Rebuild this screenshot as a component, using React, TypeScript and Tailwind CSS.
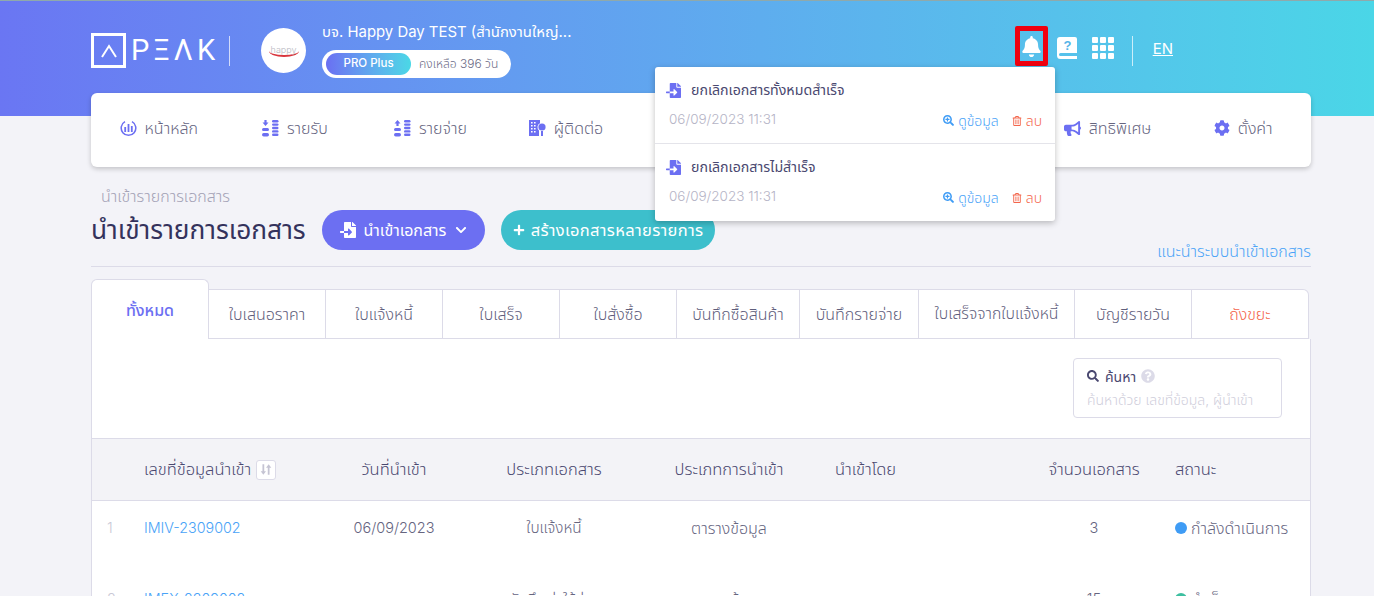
import { FaBell, FaBullhorn, FaChevronDown, FaCog, FaFileImport, FaPlus, FaQuestionCircle, FaRegTrashAlt, FaSearch, FaSearchPlus } from "react-icons/fa";

const font = "font-['Inter','Noto_Sans_Thai','Noto_Sans',sans-serif]";

const tabs = [
  { label: "ใบเสนอราคา", cls: "w-[117px] text-[16px]" },
  { label: "ใบแจ้งหนี้", cls: "w-[117px] text-[16px]" },
  { label: "ใบเสร็จ", cls: "w-[117px] text-[16px]" },
  { label: "ใบสั่งซื้อ", cls: "w-[117px] text-[16px]" },
  { label: "บันทึกซื้อสินค้า", cls: "w-[123px] text-[16px]" },
  { label: "บันทึกรายจ่าย", cls: "w-[119px] text-[16px]" },
  { label: "ใบเสร็จจากใบแจ้งหนี้", cls: "w-[156px] text-[15.800px]" },
  { label: "บัญชีรายวัน", cls: "w-[117px] text-[16px]" },
];

const gridCols = "grid grid-cols-[52px_178px_144px_176px_174px_204px_148px_1fr] items-center";

function StackIcon({ up }: { up?: boolean }) {
  return (
    <svg width="18" height="18" viewBox="0 0 18 18" fill="#6c6ff2">
      <path d={up ? "M4.5 1 7.5 4.5H5.6V7H3.4V4.5H1.5Z" : "M3.4 1H5.6V3.5H7.5L4.5 7 1.5 3.5H3.4Z"} />
      <rect x="1" y="9" width="7" height="3" rx="1.5" />
      <rect x="1" y="14" width="7" height="3.4" rx="1.7" />
      {[1, 4.4, 7.8, 11.2, 14.6].map((y) => (
        <rect key={y} x="11" y={y} width="6.5" height="2.4" rx="1.2" />
      ))}
    </svg>
  );
}

function HomeIcon() {
  return (
    <svg width="17" height="17" viewBox="0 0 17 17" fill="none" stroke="#6c6ff2">
      <path d="M5 1.6a7.3 7.3 0 1 0 7 0" strokeWidth="1.5" />
      <path d="M5.2 7v5M8.5 4v8M11.8 6v6" strokeWidth="1.8" />
    </svg>
  );
}

function ContactIcon() {
  return (
    <svg width="18" height="18" viewBox="0 0 18 18" fill="#6c6ff2">
      <path d="M1 1h11v3.2a4.4 4.4 0 0 0-1 7.3V17H1Z" />
      <path d="M3 3h1.6v1.6H3ZM6 3h1.6v1.6H6ZM3 6h1.6v1.6H3ZM6 6h1.6v1.6H6ZM3 9h1.6v1.6H3ZM6 9h1.6v1.6H6ZM3 12h1.6v1.6H3ZM6 12h1.6v1.6H6Z" fill="#fff" />
      <circle cx="14" cy="8" r="3.6" />
      <path d="M13 12h2v5h-2Z" />
    </svg>
  );
}

function HelpBook() {
  return (
    <svg width="20" height="22" viewBox="0 0 20 22">
      <path d="M3 0h15a2 2 0 0 1 2 2v14H3.500a1.500 1.500 0 0 0 0 3H20v3H3.500A3.500 3.500 0 0 1 0 18.500V3a3 3 0 0 1 3-3Z" fill="#fff" />
      <text x="10.500" y="12.500" textAnchor="middle" fontSize="13" fontWeight="700" fill="#55b4e8" fontFamily="Liberation Sans">?</text>
    </svg>
  );
}

function AppsGrid() {
  return (
    <div className="grid grid-cols-3 gap-[2px]">
      {Array.from({ length: 9 }).map((_, i) => (
        <span key={i} className="w-[6px] h-[6px] bg-white rounded-[1px]" />
      ))}
    </div>
  );
}

function Notification({ title, last }: { title: string; last?: boolean }) {
  return (
    <div className={`h-[77px] pl-[14px] pr-[13px] pt-[12px] ${last ? "" : "border-b border-[#e4e4ea]"}`}>
      <div className="flex items-center gap-[9px] h-[22px] -ml-[4px]">
        <FaFileImport className="text-[#6c6ff2] text-[15px] w-[17px]" />
        <span className="text-[14.2px] font-normal text-[#4a4870]">{title}</span>
      </div>
      <div className="flex items-center justify-between mt-[7px]">
        <span className="text-[13.5px] text-[#b5b4c6]">06/09/2023 11:31</span>
        <div className="flex items-center text-[14px] mt-[2px]">
          <FaSearchPlus className="text-[#3f9cf5] text-[11px] mr-[4px]" />
          <span className="text-[#4aa3f7]">ดูข้อมูล</span>
          <FaRegTrashAlt className="text-[#f4664c] text-[10px] ml-[13px] mr-[4px]" />
          <span className="text-[#f4664c]">ลบ</span>
        </div>
      </div>
    </div>
  );
}

function NavItem({ icon, label }: { icon: React.ReactNode; label: string }) {
  return (
    <div className="flex items-center justify-center gap-[8px] text-[16px] text-[#66657f]">
      {icon}
      <span>{label}</span>
    </div>
  );
}

export default function App() {
  return (
    <div className={`relative h-[596px] overflow-hidden bg-[#f3f3f8] font-light ${font}`}>
      {/* header */}
      <div className="h-[116px] pl-[91px] pr-[63px] border-t border-[#8fa9ab] bg-gradient-to-r from-[#6a76f3] to-[#4ad6e7] flex items-start text-white">
        <div className="flex items-center h-[71px] mt-[14px]">
          <div className="w-[35px] h-[35px] border-[3px] border-white flex items-center justify-center">
            <svg width="18" height="14" viewBox="0 0 18 14" fill="none" stroke="#fff" strokeWidth="2">
              <path d="M2 13 9 2l7 11" />
            </svg>
          </div>
          <span className="ml-[5px] font-['Roboto',sans-serif] font-normal text-[29px] tracking-[4px] leading-none">PΞΛK</span>
          <span className="w-px h-[30px] bg-white/70 ml-[10px]" />
          <div className="w-[45px] h-[45px] rounded-full bg-white ml-[31px] flex items-center justify-center">
            <span className="border-b-2 border-[#d9363e] rounded-[50%] px-[2px] text-[9px] leading-[10px] text-[#b9b9c2]">happy</span>
          </div>
          <div className="ml-[16px]">
            <div className="text-[14.900px] font-normal leading-[20px] -mt-[1px] mb-[8px]">บจ. Happy Day TEST (สำนักงานใหญ่...</div>
            <div className="w-[189px] h-[28px] bg-white rounded-full flex items-center pl-[4px]">
              <span className="w-[85px] h-[22px] rounded-full bg-gradient-to-r from-[#6a6ff2] to-[#4ad8e6] text-[11.500px] font-medium flex items-center justify-center">PRO Plus</span>
              <span className="ml-[8px] text-[12px] text-[#6b6a85]">คงเหลือ 396 วัน</span>
            </div>
          </div>
        </div>
        <div className="ml-auto mr-[138px] flex items-center h-[71px] mt-[11px]">
          <div className="self-start mt-[14px] w-[33px] h-[40px] border-[5px] border-[#f0000f] rounded-[2px] flex items-center justify-center">
            <FaBell className="text-white text-[21px]" />
          </div>
          <div className="ml-[9px]"><HelpBook /></div>
          <div className="ml-[15px]"><AppsGrid /></div>
          <span className="w-px h-[30px] bg-white/70 ml-[18px] mt-[6px]" />
          <span className="ml-[20px] mt-[3px] text-[15px] font-normal underline">EN</span>
        </div>
      </div>

      <div className="pl-[91px] pr-[63px]">
        {/* nav */}
        <div className="-mt-[23px] h-[74px] pb-[4px] bg-white rounded-[6px] shadow-[0_2px_5px_rgba(0,0,0,0.2)] grid grid-cols-9">
          <NavItem icon={<HomeIcon />} label="หน้าหลัก" />
          <NavItem icon={<StackIcon />} label="รายรับ" />
          <NavItem icon={<StackIcon up />} label="รายจ่าย" />
          <NavItem icon={<ContactIcon />} label="ผู้ติดต่อ" />
          <div />
          <div />
          <div />
          <NavItem icon={<FaBullhorn className="text-[#6c6ff2] text-[17px]" />} label="สิทธิพิเศษ" />
          <NavItem icon={<FaCog className="text-[#6c6ff2] text-[16px]" />} label="ตั้งค่า" />
        </div>

        {/* title */}
        <div className="ml-[10px] mt-[19px] h-[20px] leading-[20px] text-[16px] text-[#a3a2b6]">นำเข้ารายการเอกสาร</div>
        <div className="relative flex items-center h-[40px] mt-[4px]">
          <h1 className="text-[26.300px] font-normal text-[#34325c] w-[231px] whitespace-nowrap">นำเข้ารายการเอกสาร</h1>
          <button className="w-[163px] h-[40px] rounded-full bg-[#6c6ff2] text-white text-[16px] font-normal flex items-center justify-center gap-[8px]">
            <FaFileImport className="text-[16px]" />
            นำเข้าเอกสาร
            <FaChevronDown className="text-[12px] ml-[1px]" />
          </button>
          <button className="ml-[16px] w-[214px] h-[40px] rounded-full bg-[#3dbfcc] text-white text-[16.500px] tracking-[0.330px] font-normal flex items-center justify-center gap-[6px] whitespace-nowrap">
            <FaPlus className="text-[12px]" />
            สร้างเอกสารหลายรายการ
          </button>
          <a className="absolute right-0 top-[29px] text-[16px] text-[#4aa3f7]">แนะนำระบบนำเข้าเอกสาร</a>
        </div>
        <div className="h-px bg-[#dcdbe8] mt-[16px]" />

        {/* tabs */}
        <div className="flex items-end mt-[12px] relative z-10">
          <div className="w-[118px] h-[60px] bg-white border border-b-0 border-[#dcdbe8] rounded-t-[6px] flex items-center justify-center text-[16px] font-medium text-[#6c6ff2]">ทั้งหมด</div>
          {tabs.map((tab) => (
            <div key={tab.label} className={`${tab.cls} h-[50px] bg-white border-t border-r border-b border-[#dcdbe8] flex items-center justify-center text-[#5f5e7c] whitespace-nowrap`}>
              {tab.label}
            </div>
          ))}
          <div className="w-[117px] h-[50px] bg-white border-t border-r border-b border-[#dcdbe8] rounded-tr-[6px] flex items-center justify-center text-[16px] text-[#f4664c]">ถังขยะ</div>
        </div>

        {/* table card */}
        <div className="bg-white border-x border-[#dcdbe8] h-[300px]">
          <div className="h-[99px] flex justify-end pt-[19px] pr-[28px]">
            <div className="w-[209px] h-[60px] border border-[#dcdbe8] rounded-[4px] px-[13px] pt-[7px]">
              <div className="flex items-center text-[14px] font-normal text-[#4a4870] h-[20px]">
                <FaSearch className="text-[12px] mr-[6px]" />
                ค้นหา
                <FaQuestionCircle className="text-[14px] text-[#dcdbe8] ml-[5px]" />
              </div>
              <div className="text-[14px] text-[#cfcedb] mt-[3px] whitespace-nowrap">ค้นหาด้วย เลขที่ข้อมูล, ผู้นำเข้า</div>
            </div>
          </div>
          <div className={`${gridCols} h-[63px] bg-[#f3f3f7] border-y border-[#dcdbe8] text-[16.500px] text-[#4a4870]`}>
            <div />
            <div className="flex items-center gap-[5px]">
              เลขที่ข้อมูลนำเข้า
              <span className="w-[20px] h-[20px] border border-[#dcdbe8] rounded-[3px] bg-white flex items-center justify-center">
                <svg width="12" height="13" viewBox="0 0 10 11" fill="#c5c4d3">
                  <path d="M2 1h1.500v6H5L2.750 10 .5 7H2ZM6.500 10h1.500V4h1.500L7.250 1 5 4h1.500Z" />
                </svg>
              </span>
            </div>
            <div className="text-center">วันที่นำเข้า</div>
            <div className="text-center">ประเภทเอกสาร</div>
            <div className="text-center">ประเภทการนำเข้า</div>
            <div className="pl-[19px]">นำเข้าโดย</div>
            <div className="text-center">จำนวนเอกสาร</div>
            <div className="pl-[7px]">สถานะ</div>
          </div>
          <div className={`${gridCols} h-[54px] text-[16px] text-[#66657f]`}>
            <div className="pl-[15px] text-[14.500px] text-[#c9c8d6]">1</div>
            <div className="text-[14.300px] text-[#4aa3f7]">IMIV-2309002</div>
            <div className="text-center text-[14.500px]">06/09/2023</div>
            <div className="text-center text-[15.300px]">ใบแจ้งหนี้</div>
            <div className="text-center">ตารางข้อมูล</div>
            <div />
            <div className="text-center text-[14.500px]">3</div>
            <div className="pl-[7px] flex items-center gap-[4px] whitespace-nowrap">
              <span className="w-[12px] h-[12px] rounded-full bg-[#3f9cf5]" />
              กำลังดำเนินการ
            </div>
          </div>
          <div className={`${gridCols} mt-[17px] h-[54px] text-[16px] text-[#66657f]`}>
            <div className="pl-[15px] text-[14.500px] text-[#c9c8d6]">2</div>
            <div className="text-[14.300px] text-[#4aa3f7]">IMEX-2309002</div>
            <div />
            <div className="text-center">บันทึกค่าใช้จ่าย</div>
            <div className="text-center">ตารางข้อมูล</div>
            <div />
            <div className="text-center text-[14.500px]">15</div>
            <div className="pl-[7px] flex items-center gap-[4px]">
              <span className="w-[12px] h-[12px] rounded-full bg-[#3dbfa0]" />
              สำเร็จ
            </div>
          </div>
        </div>
      </div>

      {/* notification dropdown */}
      <div className="absolute z-20 left-[655px] top-[67px] w-[400px] bg-white rounded-[3px] shadow-[0_2px_6px_rgba(0,0,0,0.25)]">
        <Notification title="ยกเลิกเอกสารทั้งหมดสำเร็จ" />
        <Notification title="ยกเลิกเอกสารไม่สำเร็จ" last />
      </div>
    </div>
  );
}
